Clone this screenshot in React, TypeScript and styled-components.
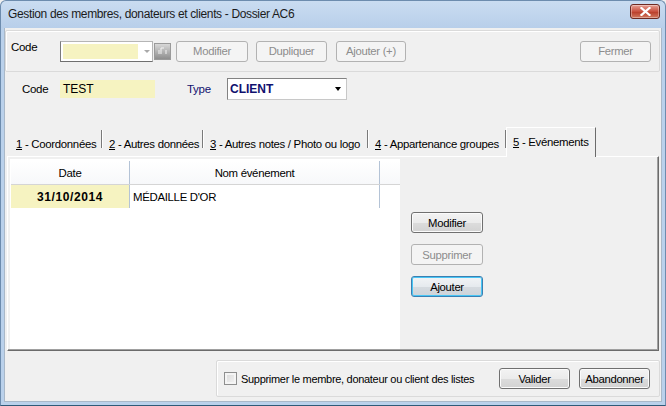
import React from "react";
import styled, { createGlobalStyle, css } from "styled-components";

const Global = createGlobalStyle`
  html, body { margin: 0; padding: 0; background: #f0f0f0; }
  body { font-family: "Liberation Sans", Arial, sans-serif; font-size: 11px; color: #000; }
  * { box-sizing: border-box; }
`;

const Window = styled.div`
  width: 666px;
  height: 406px;
  display: flex;
  flex-direction: column;
  overflow: hidden;
  white-space: nowrap;
`;

const TitleBar = styled.div`
  height: 28px;
  flex: none;
  display: flex;
  align-items: center;
  padding-left: 7px;
  background: linear-gradient(#cadcf1, #b8cfea);
  border-left: 1px solid #6d8cae;
  border-right: 1px solid #6d8cae;
  border-top: 1px solid #6d8cae;
  border-radius: 6px 6px 0 0;
  font-size: 12px;
  letter-spacing: -0.35px;
  color: #1b1b1b;
`;

const TitleText = styled.span`
  flex: 1;
  margin-top: -2px;
`;

const CloseButton = styled.div`
  width: 30px;
  height: 15px;
  margin: -6px 5px 0 0;
  border: 1px solid #6e2a22;
  border-radius: 3px;
  background: linear-gradient(#e7a196, #c9503e 50%, #b83a27 51%, #d27a60);
  display: flex;
  align-items: center;
  justify-content: center;
  box-shadow: inset 0 0 0 1px rgba(255, 255, 255, 0.35);
`;

const Frame = styled.div`
  flex: 1;
  display: flex;
  border-left: 1px solid #6d8cae;
  border-right: 1px solid #6d8cae;
  border-bottom: 1px solid #2f5a78;
  background: #bad1eb;
  padding: 0 3px 3px 3px;
`;

const Client = styled.div`
  flex: 1;
  display: flex;
  flex-direction: column;
  background: #f0f0f0;
  border: 1px solid #a9b8c8;
  border-top: none;
`;

const Toolbar = styled.div`
  height: 42px;
  margin-top: 2px;
  margin-right: 1px;
  display: flex;
  align-items: center;
  padding: 0 8px 0 5px;
  border: 1px solid #dadada;
  border-radius: 2px;
  box-shadow: inset 1px 1px 0 #fff;
`;

const Label = styled.span<{ $w: number; $color?: string; $dy?: number }>`
  width: ${(p) => p.$w}px;
  flex: none;
  color: ${(p) => p.$color || "#000"};
  position: relative;
  top: ${(p) => p.$dy || 0}px;
  font-size: 11.5px;
  letter-spacing: -0.3px;
`;

const YellowCombo = styled.div`
  width: 93px;
  height: 21px;
  border: 1px solid #b5b5b5;
  border-left-color: #7a7a7a;
  border-bottom-color: #6f6f6f;
  background: #ffffff;
  display: flex;
  padding: 2px;
`;

const YellowFill = styled.div`
  flex: 1;
  background: #f6f3c1;
  margin-right: 20px;
`;

const ComboArrow = styled.div`
  width: 0;
  height: 0;
  border-left: 3px solid transparent;
  border-right: 3px solid transparent;
  border-top: 3px solid #a9a9a9;
  align-self: center;
  margin-left: -14px;
`;

const IconButton = styled.div`
  width: 17px;
  height: 17px;
  margin-left: 1px;
  background: linear-gradient(#d8d8d8, #8e8e8e);
  border: 1px solid #9a9a9a;
  display: flex;
  align-items: center;
  justify-content: center;
`;

const Button = styled.div<{ $w: number; $disabled?: boolean; $focus?: boolean }>`
  width: ${(p) => p.$w}px;
  height: 21px;
  flex: none;
  display: flex;
  align-items: center;
  justify-content: center;
  border-radius: 3px;
  font-size: 11.3px;
  letter-spacing: -0.3px;
  border: 1px solid #707070;
  background: linear-gradient(#f3f3f3, #ebebeb 50%, #dcdcdc 51%, #d2d2d2);
  box-shadow: inset 0 0 0 1px #fbfbfb;
  color: #000;
  ${(p) =>
    p.$disabled &&
    css`
      border-color: #b2b2b2;
      background: #f4f4f4;
      box-shadow: none;
      color: #8d8d8d;
    `}
  ${(p) =>
    p.$focus &&
    css`
      border-color: #3c7fb1;
      box-shadow: inset 0 0 0 1px #48c6f5;
      background: linear-gradient(#f2f4f6, #e6eaee 50%, #d6dbe0 51%, #cdd3d9);
    `}
`;

const Spacer = styled.div`
  flex: 1;
`;

const FieldRow = styled.div`
  height: 22px;
  margin-top: 6px;
  display: flex;
  align-items: center;
  padding-left: 17px;
`;

const YellowInput = styled.div`
  width: 95px;
  height: 18px;
  background: #f6f3c1;
  padding: 2px 0 0 3px;
  font-size: 12px;
`;

const Gap = styled.div<{ $w: number }>`
  width: ${(p) => p.$w}px;
  flex: none;
`;

const TypeCombo = styled.div`
  width: 120px;
  height: 22px;
  border: 1px solid #828282;
  border-right-color: #c8c8c8;
  border-bottom-color: #c8c8c8;
  background: #fff;
  display: flex;
  align-items: center;
  padding: 0 5px 0 2px;
  font-weight: bold;
  font-size: 12px;
  color: #10106e;
`;

const BlackArrow = styled.div`
  margin-left: auto;
  width: 0;
  height: 0;
  border-left: 3px solid transparent;
  border-right: 3px solid transparent;
  border-top: 4px solid #000;
`;

const TabArea = styled.div`
  margin: 27px 2px 0 2px;
  display: flex;
  flex-direction: column;
`;

const TabStrip = styled.div`
  height: 29px;
  display: flex;
  align-items: flex-end;
  padding-left: 2px;
`;

const Tab = styled.div<{ $w: number; $active?: boolean }>`
  width: ${(p) => p.$w}px;
  height: 26px;
  flex: none;
  display: flex;
  align-items: center;
  padding: 2px 0 0 7px;
  font-size: 11.4px;
  letter-spacing: -0.3px;
  position: relative;
  &::after {
    content: "";
    position: absolute;
    right: 0;
    top: 0;
    height: 18px;
    border-right: 1px solid #7a7a7a;
    box-shadow: 1px 0 0 #fff;
  }
  ${(p) =>
    p.$active &&
    css`
      height: 30px;
      margin-bottom: -1px;
      padding: 0 0 2px 6px;
      background: #f0f0f0;
      border-left: 1px solid #fff;
      border-top: 1px solid #fff;
      border-right: 1px solid #6b6b6b;
      z-index: 1;
      &::after {
        display: none;
      }
    `}
`;

const Key = styled.span`
  text-decoration: underline;
`;

const TabPanel = styled.div`
  height: 195px;
  display: flex;
  align-items: flex-start;
  padding: 2px 0 0 2px;
  border-top: 1px solid #fff;
  border-left: 1px solid #fff;
  border-right: 1px solid #6b6b6b;
  border-bottom: 1px solid #6b6b6b;
  box-shadow: inset -1px -1px 0 #a0a0a0;
`;

const Grid = styled.div`
  width: 390px;
  height: 190px;
  background: #fff;
  padding: 2px 0 0 1px;
  flex: none;
`;

const GridRow = styled.div<{ $header?: boolean }>`
  display: flex;
  height: ${(p) => (p.$header ? 24 : 23)}px;
  ${(p) =>
    p.$header &&
    css`
      border-bottom: 1px solid #d5d5d5;
      background: linear-gradient(#ffffff, #f7f8fa);
    `}
`;

const Cell = styled.div<{ $w: number; $bold?: boolean; $yellow?: boolean; $center?: boolean }>`
  width: ${(p) => p.$w}px;
  flex: none;
  display: flex;
  align-items: center;
  justify-content: ${(p) => (p.$center ? "center" : "flex-start")};
  padding-left: ${(p) => (p.$center ? 0 : 3)}px;
  border-right: 1px solid #b4c3d6;
  font-size: ${(p) => (p.$bold ? 12 : 11.4)}px;
  font-weight: ${(p) => (p.$bold ? "bold" : "normal")};
  letter-spacing: ${(p) => (p.$bold ? 0.6 : -0.3)}px;
  background: ${(p) => (p.$yellow ? "#f6f3c1" : "transparent")};
`;

const SideButtons = styled.div`
  margin: 53px 0 0 11px;
  display: flex;
  flex-direction: column;
  gap: 11px;
`;

const Footer = styled.div`
  margin-top: 9px;
  display: flex;
  justify-content: flex-end;
  padding-right: 1px;
`;

const FooterPanel = styled.div`
  width: 444px;
  height: 37px;
  display: flex;
  align-items: center;
  padding: 0 9px 0 7px;
  border: 1px solid #dadada;
  border-radius: 2px;
  box-shadow: inset 1px 1px 0 #fff;
`;

const Checkbox = styled.div`
  width: 13px;
  height: 13px;
  flex: none;
  border: 1px solid #8e8f8f;
  background: linear-gradient(135deg, #d9d9d9, #f4f4f4);
  box-shadow: inset 0 0 0 2px #f4f4f4;
  margin-right: 4px;
`;

const CheckLabel = styled.span`
  font-size: 11px;
  letter-spacing: -0.3px;
`;

export default function App() {
  return (
    <Window>
      <Global />
      <TitleBar>
        <TitleText>Gestion des membres, donateurs et clients - Dossier AC6</TitleText>
        <CloseButton>
          <svg width="11" height="9" viewBox="0 0 11 9">
            <path d="M1.5 1 L9.5 8 M9.5 1 L1.5 8" stroke="#fff" strokeWidth="2.2" strokeLinecap="square" />
          </svg>
        </CloseButton>
      </TitleBar>
      <Frame>
        <Client>
          <Toolbar>
            <Label $w={49} $dy={-4}>Code</Label>
            <YellowCombo>
              <YellowFill />
              <ComboArrow />
            </YellowCombo>
            <IconButton>
              <svg width="9" height="8" viewBox="0 0 9 8">
                <path d="M1 7 V3 M3 7 V1 H6 M8 7 V3" stroke="#f4f4f4" strokeWidth="1" fill="none" />
              </svg>
            </IconButton>
            <Gap $w={5} />
            <Button $w={72} $disabled>Modifier</Button>
            <Gap $w={8} />
            <Button $w={71} $disabled>Dupliquer</Button>
            <Gap $w={9} />
            <Button $w={70} $disabled>Ajouter (+)</Button>
            <Spacer />
            <Button $w={71} $disabled>Fermer</Button>
          </Toolbar>
          <FieldRow>
            <Label $w={38}>Code</Label>
            <YellowInput>TEST</YellowInput>
            <Gap $w={32} />
            <Label $w={40} $color="#10106e">Type</Label>
            <TypeCombo>
              CLIENT
              <BlackArrow />
            </TypeCombo>
          </FieldRow>
          <TabArea>
            <TabStrip>
              <Tab $w={93}><Key>1</Key>&nbsp;- Coordonnées</Tab>
              <Tab $w={101}><Key>2</Key>&nbsp;- Autres données</Tab>
              <Tab $w={165}><Key>3</Key>&nbsp;- Autres notes / Photo ou logo</Tab>
              <Tab $w={138}><Key>4</Key>&nbsp;- Appartenance groupes</Tab>
              <Tab $w={90} $active><Key>5</Key>&nbsp;- Evénements</Tab>
            </TabStrip>
            <TabPanel>
              <Grid>
                <GridRow $header>
                  <Cell $w={119} $center>Date</Cell>
                  <Cell $w={250} $center>Nom événement</Cell>
                </GridRow>
                <GridRow>
                  <Cell $w={119} $center $bold $yellow>31/10/2014</Cell>
                  <Cell $w={250}>MÉDAILLE D'OR</Cell>
                </GridRow>
              </Grid>
              <SideButtons>
                <Button $w={72}>Modifier</Button>
                <Button $w={72} $disabled>Supprimer</Button>
                <Button $w={72} $focus>Ajouter</Button>
              </SideButtons>
            </TabPanel>
          </TabArea>
          <Footer>
            <FooterPanel>
              <Checkbox />
              <CheckLabel>Supprimer le membre, donateur ou client des listes</CheckLabel>
              <Spacer />
              <Button $w={71}>Valider</Button>
              <Gap $w={9} />
              <Button $w={71}>Abandonner</Button>
            </FooterPanel>
          </Footer>
        </Client>
      </Frame>
    </Window>
  );
}
